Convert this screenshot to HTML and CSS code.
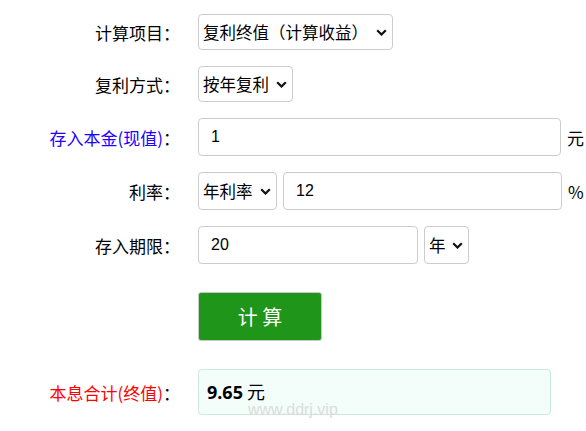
FILE: index.html
```html
<!DOCTYPE html>
<html lang="zh-CN">
<head>
    <meta charset="UTF-8">
    <meta name="viewport" content="width=device-width, initial-scale=1.0">
    <title>复利计算器</title>
    <link rel="stylesheet" href="styles.css">
</head>
<body>
    <form class="calc" id="calc-form">
        <div class="row">
            <label class="lbl">计算项目：</label>
            <div class="field">
                <span class="sel-wrap">
                    <select class="sel sel-tall sel-item"><option>复利终值（计算收益）</option></select>
                    <svg class="chev" viewBox="0 0 11 7"><path d="M1.2 1.2 L5.5 5.5 L9.8 1.2" fill="none" stroke="#111" stroke-width="2.2"/></svg>
                </span>
            </div>
        </div>
        <div class="row">
            <label class="lbl">复利方式：</label>
            <div class="field">
                <span class="sel-wrap">
                    <select class="sel sel-tall sel-mode"><option>按年复利</option></select>
                    <svg class="chev" viewBox="0 0 11 7"><path d="M1.2 1.2 L5.5 5.5 L9.8 1.2" fill="none" stroke="#111" stroke-width="2.2"/></svg>
                </span>
            </div>
        </div>
        <div class="row">
            <label class="lbl"><span class="blue">存入本金(现值)</span>：</label>
            <div class="field">
                <input class="inp inp-wide" type="text" value="1">
                <span class="unit">元</span>
            </div>
        </div>
        <div class="row">
            <label class="lbl">利率：</label>
            <div class="field">
                <span class="sel-wrap">
                    <select class="sel sel-rate"><option>年利率</option></select>
                    <svg class="chev" viewBox="0 0 11 7"><path d="M1.2 1.2 L5.5 5.5 L9.8 1.2" fill="none" stroke="#111" stroke-width="2.2"/></svg>
                </span>
                <input class="inp inp-rate" type="text" value="12">
                <span class="unit">%</span>
            </div>
        </div>
        <div class="row">
            <label class="lbl">存入期限：</label>
            <div class="field">
                <input class="inp inp-short" type="text" value="20">
                <span class="sel-wrap">
                    <select class="sel sel-small"><option>年</option></select>
                    <svg class="chev" viewBox="0 0 11 7"><path d="M1.2 1.2 L5.5 5.5 L9.8 1.2" fill="none" stroke="#111" stroke-width="2.2"/></svg>
                </span>
            </div>
        </div>
        <div class="row row-btn">
            <span class="lbl"></span>
            <div class="field">
                <button class="btn" type="button">计 算</button>
            </div>
        </div>
        <div class="row row-result">
            <label class="lbl"><span class="red">本息合计(终值)</span>：</label>
            <div class="field">
                <div class="result"><span class="amount"><b>9.65</b> 元</span></div>
            </div>
        </div>
        <div class="watermark">www.ddrj.vip</div>
    </form>
</body>
</html>
```

FILE: styles.css
```css
body {
    margin: 0;
    padding: 0;
    background-color: #fff;
    color: #000;
    font-family: "Noto Sans CJK SC", sans-serif;
    font-size: 16px;
}

.calc {
    position: relative;
    padding-top: 14px;
}

.row {
    display: flex;
    align-items: center;
    margin-bottom: 16px;
}

.row-btn,
.row-result {
    margin-top: 28px;
}

.lbl {
    flex: none;
    width: 180px;
    margin-right: 18px;
    text-align: right;
    font-size: 17px;
}

.blue {
    color: #2200ff;
}

.red {
    color: #ff0000;
}

.field {
    display: flex;
    align-items: center;
    gap: 6px;
}

.sel-wrap {
    position: relative;
    display: inline-block;
}

.sel {
    appearance: none;
    -webkit-appearance: none;
    display: block;
    box-sizing: border-box;
    height: 38px;
    margin: 0;
    padding: 0 20px 0 4px;
    border: 1px solid #ccc;
    border-radius: 4px;
    background: #fff;
    color: #000;
    font-family: "Noto Sans CJK SC", sans-serif;
    font-size: 16.5px;
}

.sel-tall {
    height: 36px;
}

.sel-item {
    width: 195px;
}

.sel-mode {
    width: 95px;
}

.sel-rate {
    width: 79px;
}

.sel-small {
    width: 45px;
}

.chev {
    position: absolute;
    right: 6px;
    top: 50%;
    width: 11px;
    height: 7px;
    margin-top: -3px;
    pointer-events: none;
}

.inp {
    box-sizing: border-box;
    height: 38px;
    margin: 0;
    padding: 0 12px;
    border: 1px solid #ccc;
    border-radius: 4px;
    color: #000;
    font-family: "Liberation Sans", "Noto Sans CJK SC", sans-serif;
    font-size: 16px;
}

.inp-wide {
    width: 363px;
}

.inp-rate {
    width: 279px;
}

.inp-short {
    width: 220px;
}

.unit {
    font-size: 17px;
}

.btn {
    box-sizing: border-box;
    width: 124px;
    height: 49px;
    border: 1px solid #c8c8c8;
    border-radius: 3px;
    background-color: #1f961a;
    color: #fff;
    font-family: "Noto Sans CJK SC", sans-serif;
    font-size: 20px;
    cursor: pointer;
}

.result {
    display: flex;
    align-items: center;
    box-sizing: border-box;
    width: 353px;
    height: 46px;
    padding: 0 8px 2px;
    border: 1px solid #c9eadc;
    border-radius: 4px;
    background-color: #f3fdf9;
    font-size: 18px;
}

.amount {
    line-height: 20px;
}

.result b {
    font-family: "Noto Sans", sans-serif;
    font-weight: 700;
}

.watermark {
    position: absolute;
    left: 248px;
    top: 402px;
    color: #dcdcdc;
    font-family: "Liberation Sans", sans-serif;
    font-size: 16px;
    line-height: 16px;
}
```
